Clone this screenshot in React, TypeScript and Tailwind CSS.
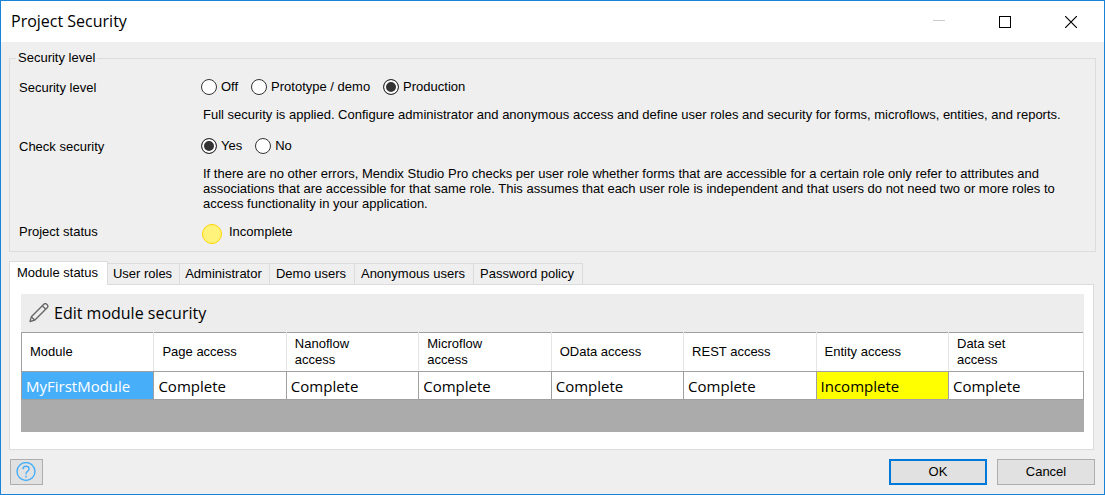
import { useState } from "react";

const sans = "font-['Liberation_Sans',Arial,sans-serif]";
const ui = "font-['Open_Sans','Noto_Sans',sans-serif]";

const tabs = [
  { name: "Module status", width: "w-[99px]" },
  { name: "User roles", width: "w-[72px]" },
  { name: "Administrator", width: "w-[90px]" },
  { name: "Demo users", width: "w-[85px]" },
  { name: "Anonymous users", width: "w-[119px]" },
  { name: "Password policy", width: "w-[109px]" },
];

const columns = [
  "Module",
  "Page access",
  "Nanoflow\naccess",
  "Microflow\naccess",
  "OData access",
  "REST access",
  "Entity access",
  "Data set\naccess",
];

const modules = [
  {
    name: "MyFirstModule",
    statuses: ["Complete", "Complete", "Complete", "Complete", "Complete", "Incomplete", "Complete"],
  },
];

function RadioGroup({ name, options, initial }: { name: string; options: string[]; initial: string }) {
  return (
    <div role="radiogroup" aria-label={name} className="flex h-4 items-center gap-[13px]">
      {options.map((option) => (
        <label key={option} className="flex items-center gap-1 leading-[18px]">
          <input
            type="radio"
            name={name}
            defaultChecked={option === initial}
            className="size-4 appearance-none rounded-full border border-[#333] bg-white checked:bg-[#333] checked:shadow-[inset_0_0_0_2px_#fff]"
          />
          {option}
        </label>
      ))}
    </div>
  );
}

function TitleBar() {
  return (
    <header className="flex h-[41px] items-center justify-between bg-white pl-[10px]">
      <h1 className={`${ui} pb-[2px] text-[16px] leading-5`}>Project Security</h1>
      <div className="flex h-full">
        <button aria-label="Minimize" disabled className="flex w-[66px] items-center justify-center">
          <svg width="12" height="12" viewBox="0 0 12 12" shapeRendering="crispEdges">
            <path d="M0 4.500h12" stroke="#ccc" />
          </svg>
        </button>
        <button aria-label="Maximize" className="flex w-[66px] items-center justify-center">
          <svg width="12" height="12" viewBox="0 0 12 12" shapeRendering="crispEdges">
            <rect x=".5" y=".5" width="11" height="11" fill="none" stroke="#000" />
          </svg>
        </button>
        <button aria-label="Close" className="flex w-[66px] items-center justify-center">
          <svg width="12" height="12" viewBox="0 0 12 12">
            <path d="M0 0l12 12M12 0L0 12" stroke="#000" strokeWidth="1.200" />
          </svg>
        </button>
      </div>
    </header>
  );
}

function ModuleTable() {
  return (
    <div className="bg-[#ababab] pb-8">
      <table className="w-full table-fixed border-collapse border border-[#a0a0a0] bg-white">
        <thead>
          <tr className="h-[39px]">
            {columns.map((column) => (
              <th
                key={column}
                scope="col"
                className="border-x border-b border-x-[#e5e5e5] border-b-[#a0a0a0] p-0 pl-2 text-left font-normal leading-4 whitespace-pre-line first:border-l-[#a0a0a0] last:w-[135px]"
              >
                {column}
              </th>
            ))}
          </tr>
        </thead>
        <tbody className={`${ui} text-[15px] leading-5`}>
          {modules.map((module) => (
            <tr key={module.name} className="h-7">
              <th scope="row" className="border border-[#a0a0a0] bg-[#47aef9] p-0 pl-1 text-left font-normal text-white">
                {module.name}
              </th>
              {module.statuses.map((status, i) => (
                <td
                  key={columns[i + 1]}
                  className={`border border-[#a0a0a0] p-0 pl-1 ${status === "Incomplete" ? "bg-[#ff0]" : ""}`}
                >
                  {status}
                </td>
              ))}
            </tr>
          ))}
        </tbody>
      </table>
    </div>
  );
}

export default function App() {
  const [active, setActive] = useState("Module status");

  return (
    <div className={`${sans} border border-[#1883d7] bg-[#efefef] text-[13px] text-black`}>
      <TitleBar />
      <main className="px-2 pt-2 pb-[9px]">
        <fieldset className="border border-[#dcdcdc] pb-[7px]">
          <legend className="ml-[6px] px-[2px] leading-4">Security level</legend>
          <div className="grid grid-cols-[182px_1fr] pt-[13px] pl-[9px]">
            <div className="leading-[18px]">Security level</div>
            <div className="pb-4">
              <RadioGroup name="Security level" options={["Off", "Prototype / demo", "Production"]} initial="Production" />
              <p className="mt-3 pl-[2px] leading-[15px]">
                Full security is applied. Configure administrator and anonymous access and define user roles and
                security for forms, microflows, entities, and reports.
              </p>
            </div>
            <div className="leading-[18px]">Check security</div>
            <div className="pb-[13px]">
              <RadioGroup name="Check security" options={["Yes", "No"]} initial="Yes" />
              <p className="mt-3 pr-6 pl-[2px] leading-[15px]">
                If there are no other errors, Mendix Studio Pro checks per user role whether forms that are accessible
                for a certain role only refer to attributes and associations that are accessible for that same role.
                This assumes that each user role is independent and that users do not need two or more roles to access
                functionality in your application.
              </p>
            </div>
            <div className="leading-4">Project status</div>
            <div className="flex gap-[7px] pl-px leading-4">
              <span className="size-5 rounded-full border border-[#ffd500] bg-[#fff37c]" />
              Incomplete
            </div>
          </div>
        </fieldset>

        <div role="tablist" className="mt-[9px] flex items-end">
          {tabs.map(({ name, width }) => (
            <button
              key={name}
              role="tab"
              aria-selected={active === name}
              onClick={() => setActive(name)}
              className={`${width} border-t border-r border-[#dcdcdc] pr-[2px] whitespace-nowrap first:border-l ${
                active === name ? "relative z-10 -mb-px h-6 bg-white pb-px" : "h-[21px]"
              }`}
            >
              {name}
            </button>
          ))}
        </div>
        <section
          role="tabpanel"
          aria-label={active}
          className="mr-[2px] border border-[#dcdcdc] bg-white pt-[9px] pr-[9px] pb-[17px] pl-[11px]"
        >
          <div className="flex h-[38px] items-center bg-[#ededed] pl-2">
            <button className={`${ui} flex items-center gap-[5px] text-[16px] leading-5`}>
              <svg width="20" height="20" viewBox="0 0 20 20" fill="none" stroke="#666" strokeWidth="1.300" strokeLinejoin="round">
                <path d="M1 18.500l1.300-4.700L14.800 1.300c.8-.8 2.100-.8 2.900 0l.5.5c.8.8.8 2.100 0 2.900L5.700 17.200z" />
                <path d="M13.300 2.800l3.400 3.400M2.300 13.800l3.400 3.400" />
              </svg>
              Edit module security
            </button>
          </div>
          <ModuleTable />
        </section>

        <footer className="mt-[9px] flex justify-between px-px">
          <button aria-label="Help" className="flex h-[26px] w-[33px] items-center border border-[#adadad] bg-[#e1e1e1] pl-[5px]">
            <svg width="20" height="20" viewBox="0 0 20 20" fill="none" stroke="#47aef9" strokeWidth="1.400">
              <circle cx="10" cy="9.500" r="9" />
              <path d="M7 7.300c0-1.800 1.200-3 3-3s3.100 1.100 3.100 2.700c0 2.300-3.100 2.300-3.100 4.800v.5M10 13.500v2" />
            </svg>
          </button>
          <div className="flex gap-[10px]">
            <button className="h-[26px] w-[98px] border-2 border-[#0078d7] bg-[#e1e1e1]">OK</button>
            <button className="h-[26px] w-[98px] border border-[#adadad] bg-[#e1e1e1]">Cancel</button>
          </div>
        </footer>
      </main>
    </div>
  );
}
